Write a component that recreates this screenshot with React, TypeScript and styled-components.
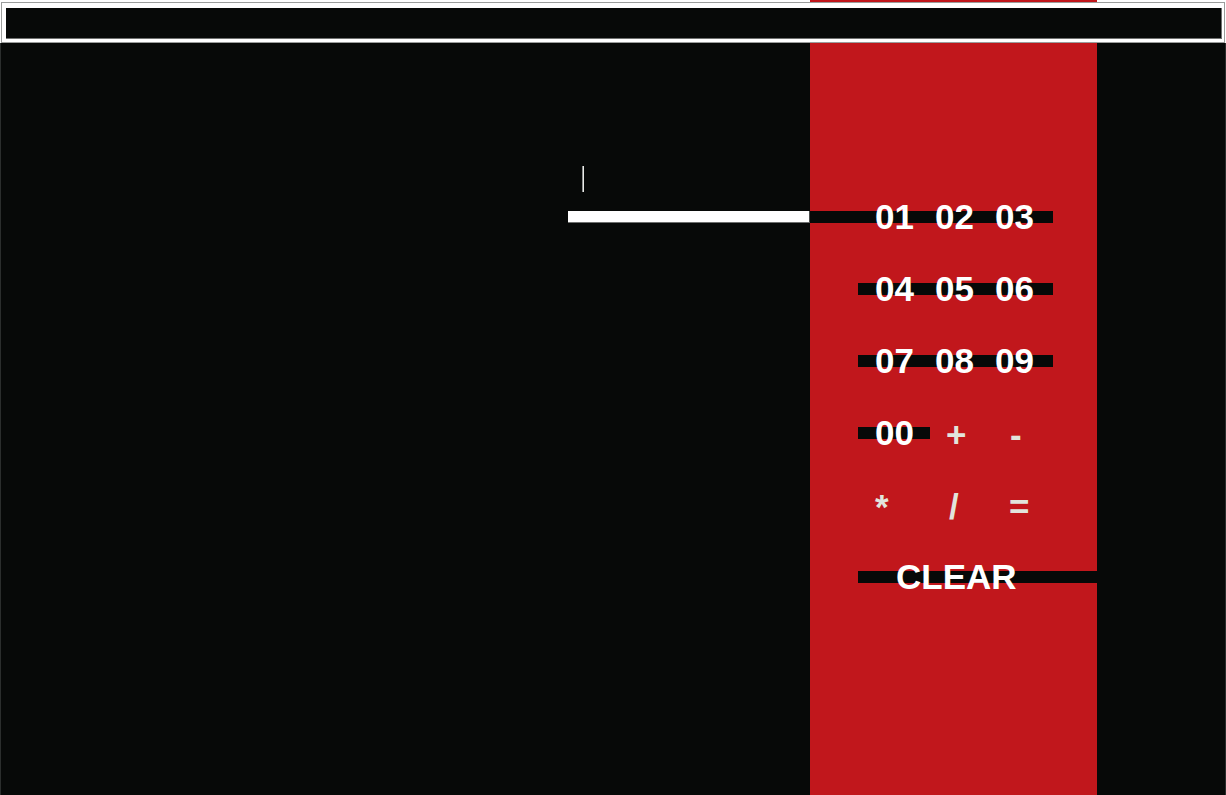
import React from "react";
import styled, { createGlobalStyle } from "styled-components";

const INK = "#070908";
const RED = "#c1171c";

const Global = createGlobalStyle`
  html, body { margin: 0; padding: 0; background: #ffffff; }
  body { font-family: "Liberation Sans", Arial, sans-serif; }
  #root { min-height: 100vh; }
  * { box-sizing: border-box; }
`;

const Page = styled.div`
  display: flex;
  flex-direction: column;
  min-height: 100vh;
`;

const TopEdge = styled.div`
  height: 2px;
  display: flex;
  padding-left: 810px;
`;

const TopEdgeRed = styled.div`
  width: 287px;
  background: ${RED};
`;

const Header = styled.header`
  margin: 0 1px;
  border: 1px solid #9b9d9c;
  background: #ffffff;
  padding: 5px 2px 3px 4px;
`;

const Field = styled.input`
  display: block;
  width: 100%;
  height: 31px;
  margin: 0;
  padding: 0;
  border: none;
  border-right: 1px solid #6f7170;
  border-bottom: 1px solid #6f7170;
  background: ${INK};
  color: #fff;
  outline: none;
`;

const Main = styled.main`
  flex: 1;
  display: flex;
  background: ${INK};
  border-left: 1px solid #2b2e2d;
  border-right: 1px solid #2b2e2d;
`;

const LeftPane = styled.section`
  width: 809px;
  flex: none;
  padding-top: 123px;
  display: flex;
  flex-direction: column;
  align-items: flex-end;
`;

const Display = styled.div`
  width: 242px;
  display: flex;
  flex-direction: column;
`;

const Caret = styled.span`
  display: block;
  width: 2px;
  height: 26px;
  margin-left: 14px;
  margin-bottom: 19px;
  background: #e9ebe8;
  border-left: 1px solid #8d8f8e;
`;

const DisplayBar = styled.div`
  height: 12px;
  background: #ffffff;
  border-bottom: 1px solid #6d6f6e;
  border-right: 1px solid #4a4c4b;
`;

const RedPane = styled.section`
  width: 287px;
  flex: none;
  background: ${RED};
  padding: 168px 0 0 48px;
  display: flex;
  flex-direction: column;
  gap: 60px;
`;

const Row = styled.div<{ $bar: number; $lead?: boolean }>`
  height: 12px;
  display: flex;
  margin-left: ${(p) => (p.$lead ? -48 : 0)}px;
  padding-left: ${(p) => (p.$lead ? 65 : 17)}px;
  background: linear-gradient(${INK}, ${INK}) no-repeat left top /
    ${(p) => p.$bar}px 100%;
`;

const Key = styled.button<{ $op?: boolean; $indent?: number; $wide?: boolean }>`
  flex: none;
  width: ${(p) => (p.$wide ? 200 : 60)}px;
  height: 12px;
  margin: 0;
  padding: ${(p) => (p.$op ? 2 : 0)}px 0 0 ${(p) => p.$indent ?? 0}px;
  border: none;
  background: transparent;
  text-align: left;
  font-family: "Liberation Sans", Arial, sans-serif;
  font-weight: 700;
  font-size: 35px;
  line-height: 12px;
  white-space: nowrap;
  overflow: visible;
  color: ${(p) => (p.$op ? "#e2e4dc" : "#ffffff")};
  cursor: pointer;
`;

const RightPane = styled.section`
  flex: 1;
`;

type KeyDef = { t: string; op?: boolean; indent?: number; wide?: boolean };
type RowDef = { bar: number; lead?: boolean; keys: KeyDef[] };

const rows: RowDef[] = [
  { bar: 243, lead: true, keys: [{ t: "01" }, { t: "02" }, { t: "03" }] },
  { bar: 195, keys: [{ t: "04" }, { t: "05" }, { t: "06" }] },
  { bar: 195, keys: [{ t: "07" }, { t: "08" }, { t: "09" }] },
  {
    bar: 72,
    keys: [
      { t: "00" },
      { t: "+", op: true, indent: 11 },
      { t: "-", op: true, indent: 15 },
    ],
  },
  {
    bar: 0,
    keys: [
      { t: "*", op: true, indent: 0 },
      { t: "/", op: true, indent: 14 },
      { t: "=", op: true, indent: 14 },
    ],
  },
  { bar: 239, keys: [{ t: "CLEAR", indent: 21, wide: true }] },
];

export default function App() {
  return (
    <Page>
      <Global />
      <TopEdge>
        <TopEdgeRed />
      </TopEdge>
      <Header>
        <Field type="text" readOnly aria-label="input" />
      </Header>
      <Main>
        <LeftPane>
          <Display>
            <Caret />
            <DisplayBar />
          </Display>
        </LeftPane>
        <RedPane>
          {rows.map((r, i) => (
            <Row key={i} $bar={r.bar} $lead={r.lead}>
              {r.keys.map((k) => (
                <Key key={k.t} $op={k.op} $indent={k.indent} $wide={k.wide}>
                  {k.t}
                </Key>
              ))}
            </Row>
          ))}
        </RedPane>
        <RightPane />
      </Main>
    </Page>
  );
}
